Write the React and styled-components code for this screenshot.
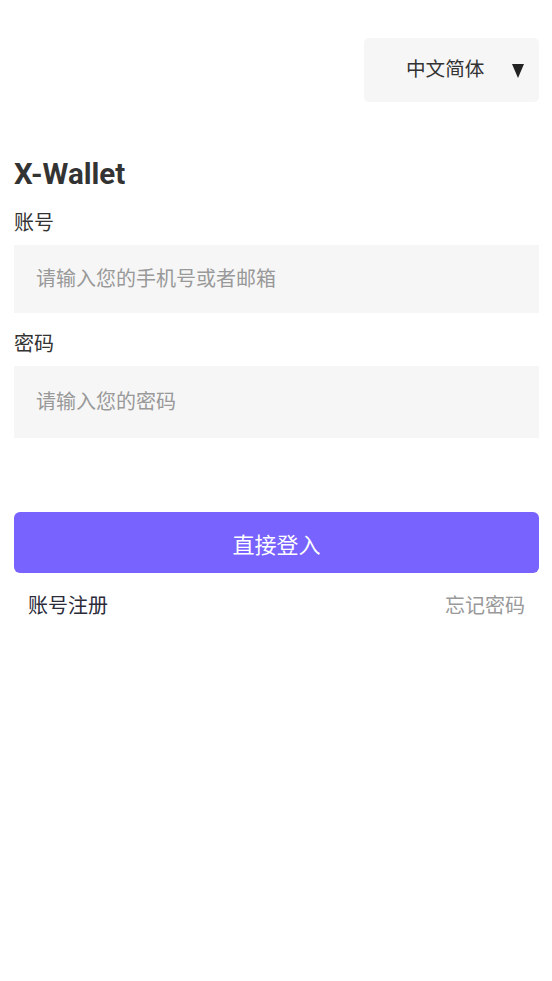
import React, { useState } from 'react';
import styled, { createGlobalStyle } from 'styled-components';

const GlobalStyle = createGlobalStyle`
    html, body {
        margin: 0;
        padding: 0;
        background: #fff;
    }
    body {
        font-family: Roboto, "Noto Sans CJK SC", sans-serif;
        color: #333;
    }
    * {
        box-sizing: border-box;
    }
`

const Page = styled.div`
    width: 552px;
    min-height: 981px;
    padding: 38px 13px 0 14px;
    display: flex;
    flex-direction: column;
`

const TopBar = styled.div`
    display: flex;
    justify-content: flex-end;
`

const LangSelect = styled.div`
    width: 175px;
    height: 64px;
    background: #f6f6f6;
    border-radius: 5px;
    display: flex;
    align-items: center;
    padding-left: 42px;
    font-size: 19.6px;
    line-height: 28px;
    color: #333;
    cursor: pointer;
`

const Caret = styled.span`
    width: 0;
    height: 0;
    margin-left: 28px;
    margin-top: 2px;
    border-left: 6.5px solid transparent;
    border-right: 6.5px solid transparent;
    border-top: 14px solid #222;
`

const Title = styled.h1`
    margin: 52px 0 0;
    font-size: 29.5px;
    line-height: 40px;
    font-weight: 700;
    color: #333;
`

const Field = styled.div`
    display: flex;
    flex-direction: column;
    margin-top: ${props => props.$gap}px;
`

const Label = styled.label`
    font-size: 20px;
    line-height: 28px;
    color: #333;
    margin-bottom: 8px;
`

const Input = styled.input`
    height: ${props => props.$h}px;
    width: 100%;
    border: none;
    outline: none;
    background: #f6f6f6;
    padding: 0 22px;
    font-family: inherit;
    font-size: 20px;
    color: #333;
    &::placeholder {
        color: #999;
    }
`

const SubmitButton = styled.button`
    margin-top: 74px;
    height: 61px;
    width: 100%;
    border: none;
    border-radius: 6px;
    background: #7863fe;
    color: #fff;
    font-family: inherit;
    font-size: 22px;
    cursor: pointer;
`

const LinkRow = styled.div`
    margin-top: 19px;
    padding: 0 14px;
    display: flex;
    justify-content: space-between;
    font-size: 20px;
    line-height: 28px;
`

const TextLink = styled.a`
    color: ${props => props.$muted ? '#999' : '#2b2b3a'};
    text-decoration: none;
    cursor: pointer;
`

const App = () => {
    const [form, setForm] = useState({ account: '', password: '' });

    const onChange = e => {
        const { name, value } = e.target;
        setForm({ ...form, [name]: value });
    };

    return (
        <>
            <GlobalStyle />
            <Page>
                <TopBar>
                    <LangSelect>
                        中文简体
                        <Caret />
                    </LangSelect>
                </TopBar>
                <Title>X-Wallet</Title>
                <Field $gap={15}>
                    <Label>账号</Label>
                    <Input
                        $h={68}
                        name="account"
                        placeholder="请输入您的手机号或者邮箱"
                        value={form.account}
                        onChange={onChange}
                    />
                </Field>
                <Field $gap={17}>
                    <Label>密码</Label>
                    <Input
                        $h={72}
                        name="password"
                        type="password"
                        placeholder="请输入您的密码"
                        value={form.password}
                        onChange={onChange}
                    />
                </Field>
                <SubmitButton>直接登入</SubmitButton>
                <LinkRow>
                    <TextLink>账号注册</TextLink>
                    <TextLink $muted>忘记密码</TextLink>
                </LinkRow>
            </Page>
        </>
    );
};

export default App;
